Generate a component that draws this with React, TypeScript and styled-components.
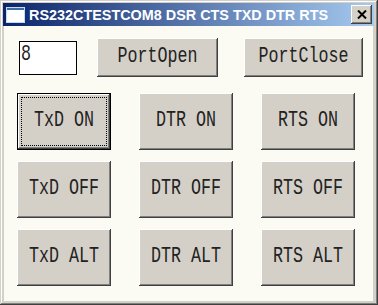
import React from "react";
import styled, { createGlobalStyle } from "styled-components";

const Global = createGlobalStyle`
  html, body {
    margin: 0;
    padding: 0;
    background: #d4d0c8;
  }
`;

const Window = styled("div")`
  box-sizing: border-box;
  width: 378px;
  height: 305px;
  display: flex;
  flex-direction: column;
  background: #d4d0c8;
  padding: 3px 4px 4px 3px;
  box-shadow: inset -1px -1px #404040, inset 1px 1px #d4d0c8,
    inset -2px -2px #808080, inset 2px 2px #ffffff;
`;

const TitleBar = styled("div")`
  height: 23px;
  display: flex;
  align-items: center;
  padding: 0 2px 0 3px;
  background: linear-gradient(to right, #0a246a, #a6caf0);
  font-family: "Liberation Sans", Arial, sans-serif;
  font-weight: bold;
  font-size: 14.4px;
  color: #ffffff;
  white-space: nowrap;
`;

const TitleText = styled("span")`
  flex: 1;
  margin-left: 4px;
`;

const CloseBox = styled("div")`
  width: 21px;
  height: 19px;
  display: flex;
  align-items: center;
  justify-content: center;
  background: #d4d0c8;
  box-shadow: inset -1px -1px #404040, inset 1px 1px #ffffff,
    inset -2px -2px #808080;
`;

const Client = styled("div")`
  flex: 1;
  background: #fbfbf3;
  margin: 0 1px 0 1px;
  padding: 12px 0 0 13px;
  display: flex;
  flex-direction: column;
  gap: 16px;
`;

const TopRow = styled("div")`
  display: flex;
  align-items: center;
  height: 39px;
`;

const PortInput = styled("div")`
  box-sizing: border-box;
  width: 58px;
  height: 34px;
  margin-left: 2px;
  margin-right: 20px;
  border: 1px solid #000;
  background: #ffffff;
  font-family: "Liberation Mono", monospace;
  font-size: 16.67px;
  line-height: 19px;
  color: #222;
`;

const Grid = styled("div")`
  display: grid;
  grid-template-columns: repeat(3, 94px);
  grid-auto-rows: 57px;
  column-gap: 28px;
  row-gap: 11px;
`;

const Btn = styled("div")<{ $w?: number; $h?: number; $def?: boolean }>`
  position: relative;
  box-sizing: border-box;
  width: ${(p) => (p.$w ? `${p.$w}px` : "100%")};
  height: ${(p) => (p.$h ? `${p.$h}px` : "100%")};
  display: flex;
  align-items: center;
  justify-content: center;
  background: #d4d0c8;
  border: ${(p) => (p.$def ? "1px solid #000" : "none")};
  box-shadow: inset -1px -1px #404040, inset 1px 1px #ffffff,
    inset -2px -2px #808080;
  font-family: "Liberation Mono", monospace;
  font-size: 16.67px;
  color: #222;
  white-space: pre;
  &::after {
    content: "";
    display: ${(p) => (p.$def ? "block" : "none")};
    position: absolute;
    inset: 3px;
    border: 1px dotted #000;
  }
`;

const Label = styled("span")`
  display: inline-block;
  transform: scaleY(1.3);
  margin-top: -2px;
`;

const InputText = styled("span")`
  display: inline-block;
  transform: scaleY(1.3);
  transform-origin: top left;
  margin-left: 1px;
`;

const rows = [
  ["TxD ON", "DTR ON", "RTS ON"],
  ["TxD OFF", "DTR OFF", "RTS OFF"],
  ["TxD ALT", "DTR ALT", "RTS ALT"],
];

export default function App() {
  return (
    <>
      <Global />
      <Window>
        <TitleBar>
          <svg width="19" height="16" viewBox="0 0 19 16">
            <rect x="0.5" y="0.5" width="18" height="15" fill="#ffffff" stroke="#c8d8f0" />
            <rect x="1" y="1" width="17" height="2" fill="#3a6ea5" />
          </svg>
          <TitleText>RS232CTESTCOM8 DSR CTS TXD DTR RTS</TitleText>
          <CloseBox>
            <svg width="10" height="9" viewBox="0 0 10 9">
              <path d="M1 0.5 L9 8.5 M9 0.5 L1 8.5" stroke="#000" strokeWidth="2" />
            </svg>
          </CloseBox>
        </TitleBar>
        <Client>
          <TopRow>
            <PortInput>
              <InputText>8</InputText>
            </PortInput>
            <Btn $w={121} $h={39}>
              <Label>PortOpen</Label>
            </Btn>
            <div style={{ width: 26 }} />
            <Btn $w={119} $h={39}>
              <Label>PortClose</Label>
            </Btn>
          </TopRow>
          <Grid>
            {rows.flat().map((t, i) => (
              <Btn key={t} $def={i === 0}>
                <Label>{t}</Label>
              </Btn>
            ))}
          </Grid>
        </Client>
      </Window>
    </>
  );
}
